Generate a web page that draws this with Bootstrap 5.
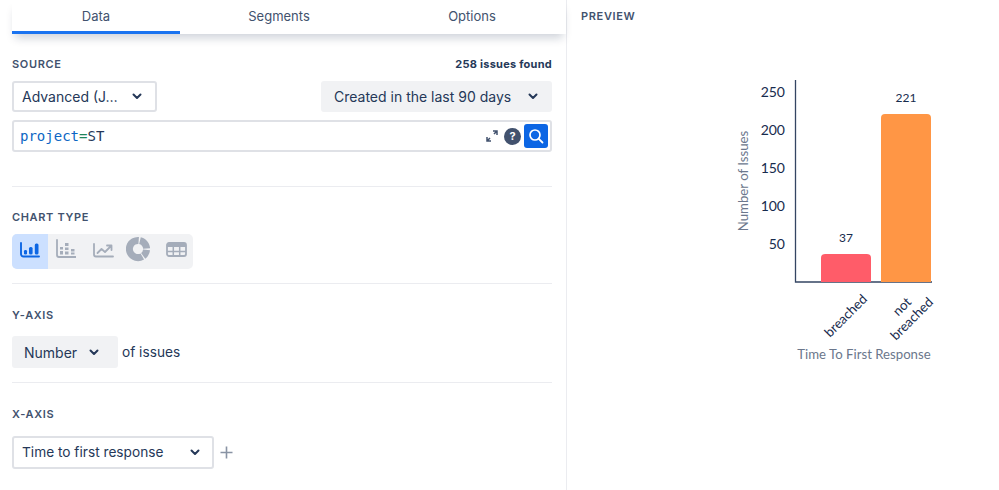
<!DOCTYPE html>
<html lang="en">
<head>
<meta charset="utf-8">
<title>Chart editor</title>
<link rel="stylesheet" href="https://cdn.jsdelivr.net/npm/bootstrap@5.3.0/dist/css/bootstrap.min.css">
<style>
html,body{height:100%;overflow:hidden}
body{font-family:Inter,"Noto Sans",sans-serif;color:#253858;background:#fff;font-size:14px}
.shell{height:490px}
.leftpane{width:567px;border-right:1px solid #ebecf0;flex:none}
.tabbar{margin-left:12px;height:34px;box-shadow:0 7px 10px -3px rgba(9,30,66,.2);background:#fff}
.tabitem{height:34px;font-size:13px;line-height:33px;text-align:center;color:#42526e}
.tab-a{width:168px;border-bottom:3px solid #1a73f0;line-height:33px}
.tab-b{width:198px}
.tab-c{width:188px}
.formarea{padding:0 14px 0 12px}
.seclabel{font-size:11px;font-weight:600;letter-spacing:.65px;color:#42526e;line-height:14px}
.found{font-size:11px;font-weight:700;color:#253858;letter-spacing:.25px;line-height:14px}
.pick{height:32px;border-radius:3px;font-size:14px;color:#253858;display:flex;align-items:center;justify-content:space-between;padding:0 12px 0 11px;background:#fff;border:2px solid #dfe1e6}
.pick-grey{background:#f1f2f4;border-color:#f1f2f4}
.w-adv{width:145px;height:31px;padding-left:8px;padding-right:13px}
.w-range{width:231px;height:31px}
.w-num{width:106px;padding-left:10px;padding-right:17px}
.w-xaxis{width:202px;height:33px;padding-left:8px;padding-right:12px;font-size:13.700px}
.jql{height:32px;border:2px solid #dfe1e6;border-radius:3px;padding:0 2px 0 6px}
.jql-text{font-family:"DejaVu Sans Mono","Liberation Mono",monospace;font-size:14px;color:#253858}
.kw{color:#0c66c4}
.op{color:#1f845a}
.go{width:24px;height:24px;background:#0c66e4;border-radius:3px;margin-left:3px}
.q{width:17px;height:17px;border-radius:50%;background:#42526e;color:#fff;font-size:11px;font-weight:700;line-height:17px;text-align:center;margin-left:6px}
.rule{height:1px;background:#ebecf0}
.charts{width:181px;height:35px;background:#f1f2f4;border-radius:5px;overflow:hidden;margin-top:10px}
.ctype{height:35px;flex:none;padding-top:1px}
.ctype-on{background:#cce0ff;width:36px;padding-left:8px;padding-top:8px}
.ct2{width:37px;padding-left:8px;padding-top:5px}
.ct3{width:34px;padding-left:8px;padding-top:9px}
.ct4{width:38px;padding-left:7px;padding-top:2px}
.ct5{width:36px;padding-left:9px;padding-top:8px}
.ctype svg{display:block}
.txt{font-size:13.700px;color:#253858}
.previewpane{min-width:0}
.preview-label{font-size:11px;font-weight:600;letter-spacing:.65px;color:#42526e;line-height:14px;padding:9px 0 0 14px}
.chartsvg{display:block}
.cfont{font-family:Lato,"Open Sans",sans-serif}
.head-src{margin-top:23px}
.row-src{margin-top:10px}
.row-jql{margin-top:8px}
.r1{margin-top:34px}
.l2{margin-top:23px}
.r2{margin-top:14px}
.l3{margin-top:24px}
.row-y{margin-top:14px}
.r3{margin-top:14px}
.l4{margin-top:24px}
.row-x{margin-top:15px;gap:6px}
</style>
</head>
<body>
<div class="shell d-flex">
  <div class="leftpane">
    <div class="tabbar d-flex">
      <div class="tabitem tab-a">Data</div>
      <div class="tabitem tab-b">Segments</div>
      <div class="tabitem tab-c">Options</div>
    </div>
    <div class="formarea">
      <div class="d-flex justify-content-between align-items-center head-src">
        <span class="seclabel">SOURCE</span><span class="found">258 issues found</span>
      </div>
      <div class="d-flex justify-content-between row-src">
        <div class="pick w-adv"><span>Advanced (J…</span><svg width="10" height="7" viewBox="0 0 10 7"><path d="M1.500 1.500 5 5l3.500-3.500" fill="none" stroke="#253858" stroke-width="2" stroke-linecap="round" stroke-linejoin="round"/></svg></div>
        <div class="pick pick-grey w-range"><span>Created in the last 90 days</span><svg width="10" height="7" viewBox="0 0 10 7"><path d="M1.500 1.500 5 5l3.500-3.500" fill="none" stroke="#253858" stroke-width="2" stroke-linecap="round" stroke-linejoin="round"/></svg></div>
      </div>
      <div class="jql d-flex align-items-center row-jql">
        <span class="jql-text flex-grow-1"><span class="kw">project</span><span class="op">=</span>ST</span>
        <svg width="12" height="12" viewBox="0 0 12 12"><path d="M7 1h4v4M11 1 8 4M5 11H1V7M1 11l3-3" fill="none" stroke="#42526e" stroke-width="1.500"/></svg>
        <span class="q">?</span>
        <span class="go d-flex align-items-center justify-content-center"><svg width="16" height="16" viewBox="0 0 16 16"><circle cx="7" cy="7" r="5" fill="none" stroke="#fff" stroke-width="1.700"/><path d="m10.800 10.800 3.700 3.700" stroke="#fff" stroke-width="1.800" stroke-linecap="round"/></svg></span>
      </div>
      <div class="rule r1"></div>
      <div class="seclabel l2">CHART TYPE</div>
      <div class="charts d-flex">
        <div class="ctype ctype-on"><svg width="20" height="16" viewBox="0 0 20 16"><path d="M1 1v11a2.500 2.500 0 0 0 2.500 2.500H19" fill="none" stroke="#0c66e4" stroke-width="1.900" stroke-linecap="round"/><rect x="4" y="8" width="3" height="4.500" rx="1.300" fill="#0c66e4"/><rect x="9" y="5" width="3.600" height="7.500" rx="1.500" fill="#0c66e4"/><rect x="14.800" y="1.500" width="3.700" height="11" rx="1.500" fill="#0c66e4"/></svg></div>
        <div class="ctype ct2"><svg width="20" height="19" viewBox="0 0 20 19"><path d="M1 1v15a2 2 0 0 0 2 2h17" fill="none" stroke="#a5adba" stroke-width="1.800" stroke-linecap="round"/><g fill="#a5adba"><rect x="4" y="8" width="3" height="2.500"/><rect x="4" y="12" width="3" height="3.500"/><rect x="9" y="4" width="3.500" height="3"/><rect x="9" y="8.500" width="3.500" height="2.500"/><rect x="9" y="12.500" width="3.500" height="3"/><rect x="15" y="10" width="3.500" height="2.500"/><rect x="15" y="13.500" width="3.500" height="2"/></g></svg></div>
        <div class="ctype ct3"><svg width="21" height="15" viewBox="0 0 21 15"><path d="M1 1v10.500a2 2 0 0 0 2 2h17" fill="none" stroke="#a5adba" stroke-width="1.800" stroke-linecap="round"/><path d="m4.500 10 4-4 3.500 3 6-6M14 2.500h4.500V7" fill="none" stroke="#a5adba" stroke-width="1.800" stroke-linecap="round" stroke-linejoin="round"/></svg></div>
        <div class="ctype ct4"><svg width="24" height="26" viewBox="0 0 24 26"><circle cx="12" cy="13" r="8.600" fill="none" stroke="#a5adba" stroke-width="7" stroke-dasharray="32 1.300 11 1.300 7 1.400" transform="rotate(60 12 13)"/></svg></div>
        <div class="ctype ct5"><svg width="21" height="15" viewBox="0 0 21 15"><rect x="1" y="1" width="19" height="13" rx="2" fill="none" stroke="#a5adba" stroke-width="1.800"/><path d="M1 3.500h19" stroke="#a5adba" stroke-width="3"/><path d="M1 9.500h19M7.300 1v13M13.700 1v13" stroke="#a5adba" stroke-width="1.500"/></svg></div>
      </div>
      <div class="rule r2"></div>
      <div class="seclabel l3">Y-AXIS</div>
      <div class="d-flex align-items-center row-y gap-1">
        <div class="pick pick-grey w-num"><span>Number</span><svg width="10" height="7" viewBox="0 0 10 7"><path d="M1.500 1.500 5 5l3.500-3.500" fill="none" stroke="#253858" stroke-width="2" stroke-linecap="round" stroke-linejoin="round"/></svg></div>
        <span class="txt">of issues</span>
      </div>
      <div class="rule r3"></div>
      <div class="seclabel l4">X-AXIS</div>
      <div class="d-flex align-items-center row-x">
        <div class="pick w-xaxis"><span>Time to first response</span><svg width="10" height="7" viewBox="0 0 10 7"><path d="M1.500 1.500 5 5l3.500-3.500" fill="none" stroke="#253858" stroke-width="2" stroke-linecap="round" stroke-linejoin="round"/></svg></div>
        <svg width="13" height="13" viewBox="0 0 13 13"><path d="M6.500 .5v12M.5 6.500h12" stroke="#8993a4" stroke-width="1.600"/></svg>
      </div>
    </div>
  </div>
  <div class="previewpane flex-grow-1">
    <div class="preview-label">PREVIEW</div>
    <svg class="chartsvg cfont" width="432" height="467" viewBox="567 23 432 467">
      <path d="M795.500 80v202H932" fill="none" stroke="#344563" stroke-width="1.300"/>
      <path d="M821 282v-24a4 4 0 0 1 4-4h42a4 4 0 0 1 4 4v24z" fill="#ff5c69"/>
      <path d="M881 282V118a4 4 0 0 1 4-4h42a4 4 0 0 1 4 4v164z" fill="#ff9645"/>
      <g font-size="14" fill="#172b4d" text-anchor="end">
        <text x="785" y="97">250</text>
        <text x="785" y="135">200</text>
        <text x="785" y="173">150</text>
        <text x="785" y="211">100</text>
        <text x="785" y="249">50</text>
      </g>
      <g font-size="12" fill="#172b4d" text-anchor="middle">
        <text x="846" y="242">37</text>
        <text x="906" y="102">221</text>
      </g>
      <text transform="translate(748 181) rotate(-90)" font-size="13.200" fill="#6b778c" text-anchor="middle">Number of Issues</text>
      <g font-size="13.300" fill="#172b4d" text-anchor="end">
        <text transform="translate(868 300) rotate(-45)">breached</text>
        <text transform="translate(912 303) rotate(-45)">not</text>
        <text transform="translate(934 303) rotate(-45)">breached</text>
      </g>
      <text x="864" y="359" font-size="13.200" fill="#6b778c" text-anchor="middle">Time To First Response</text>
    </svg>
  </div>
</div>
</body>
</html>
